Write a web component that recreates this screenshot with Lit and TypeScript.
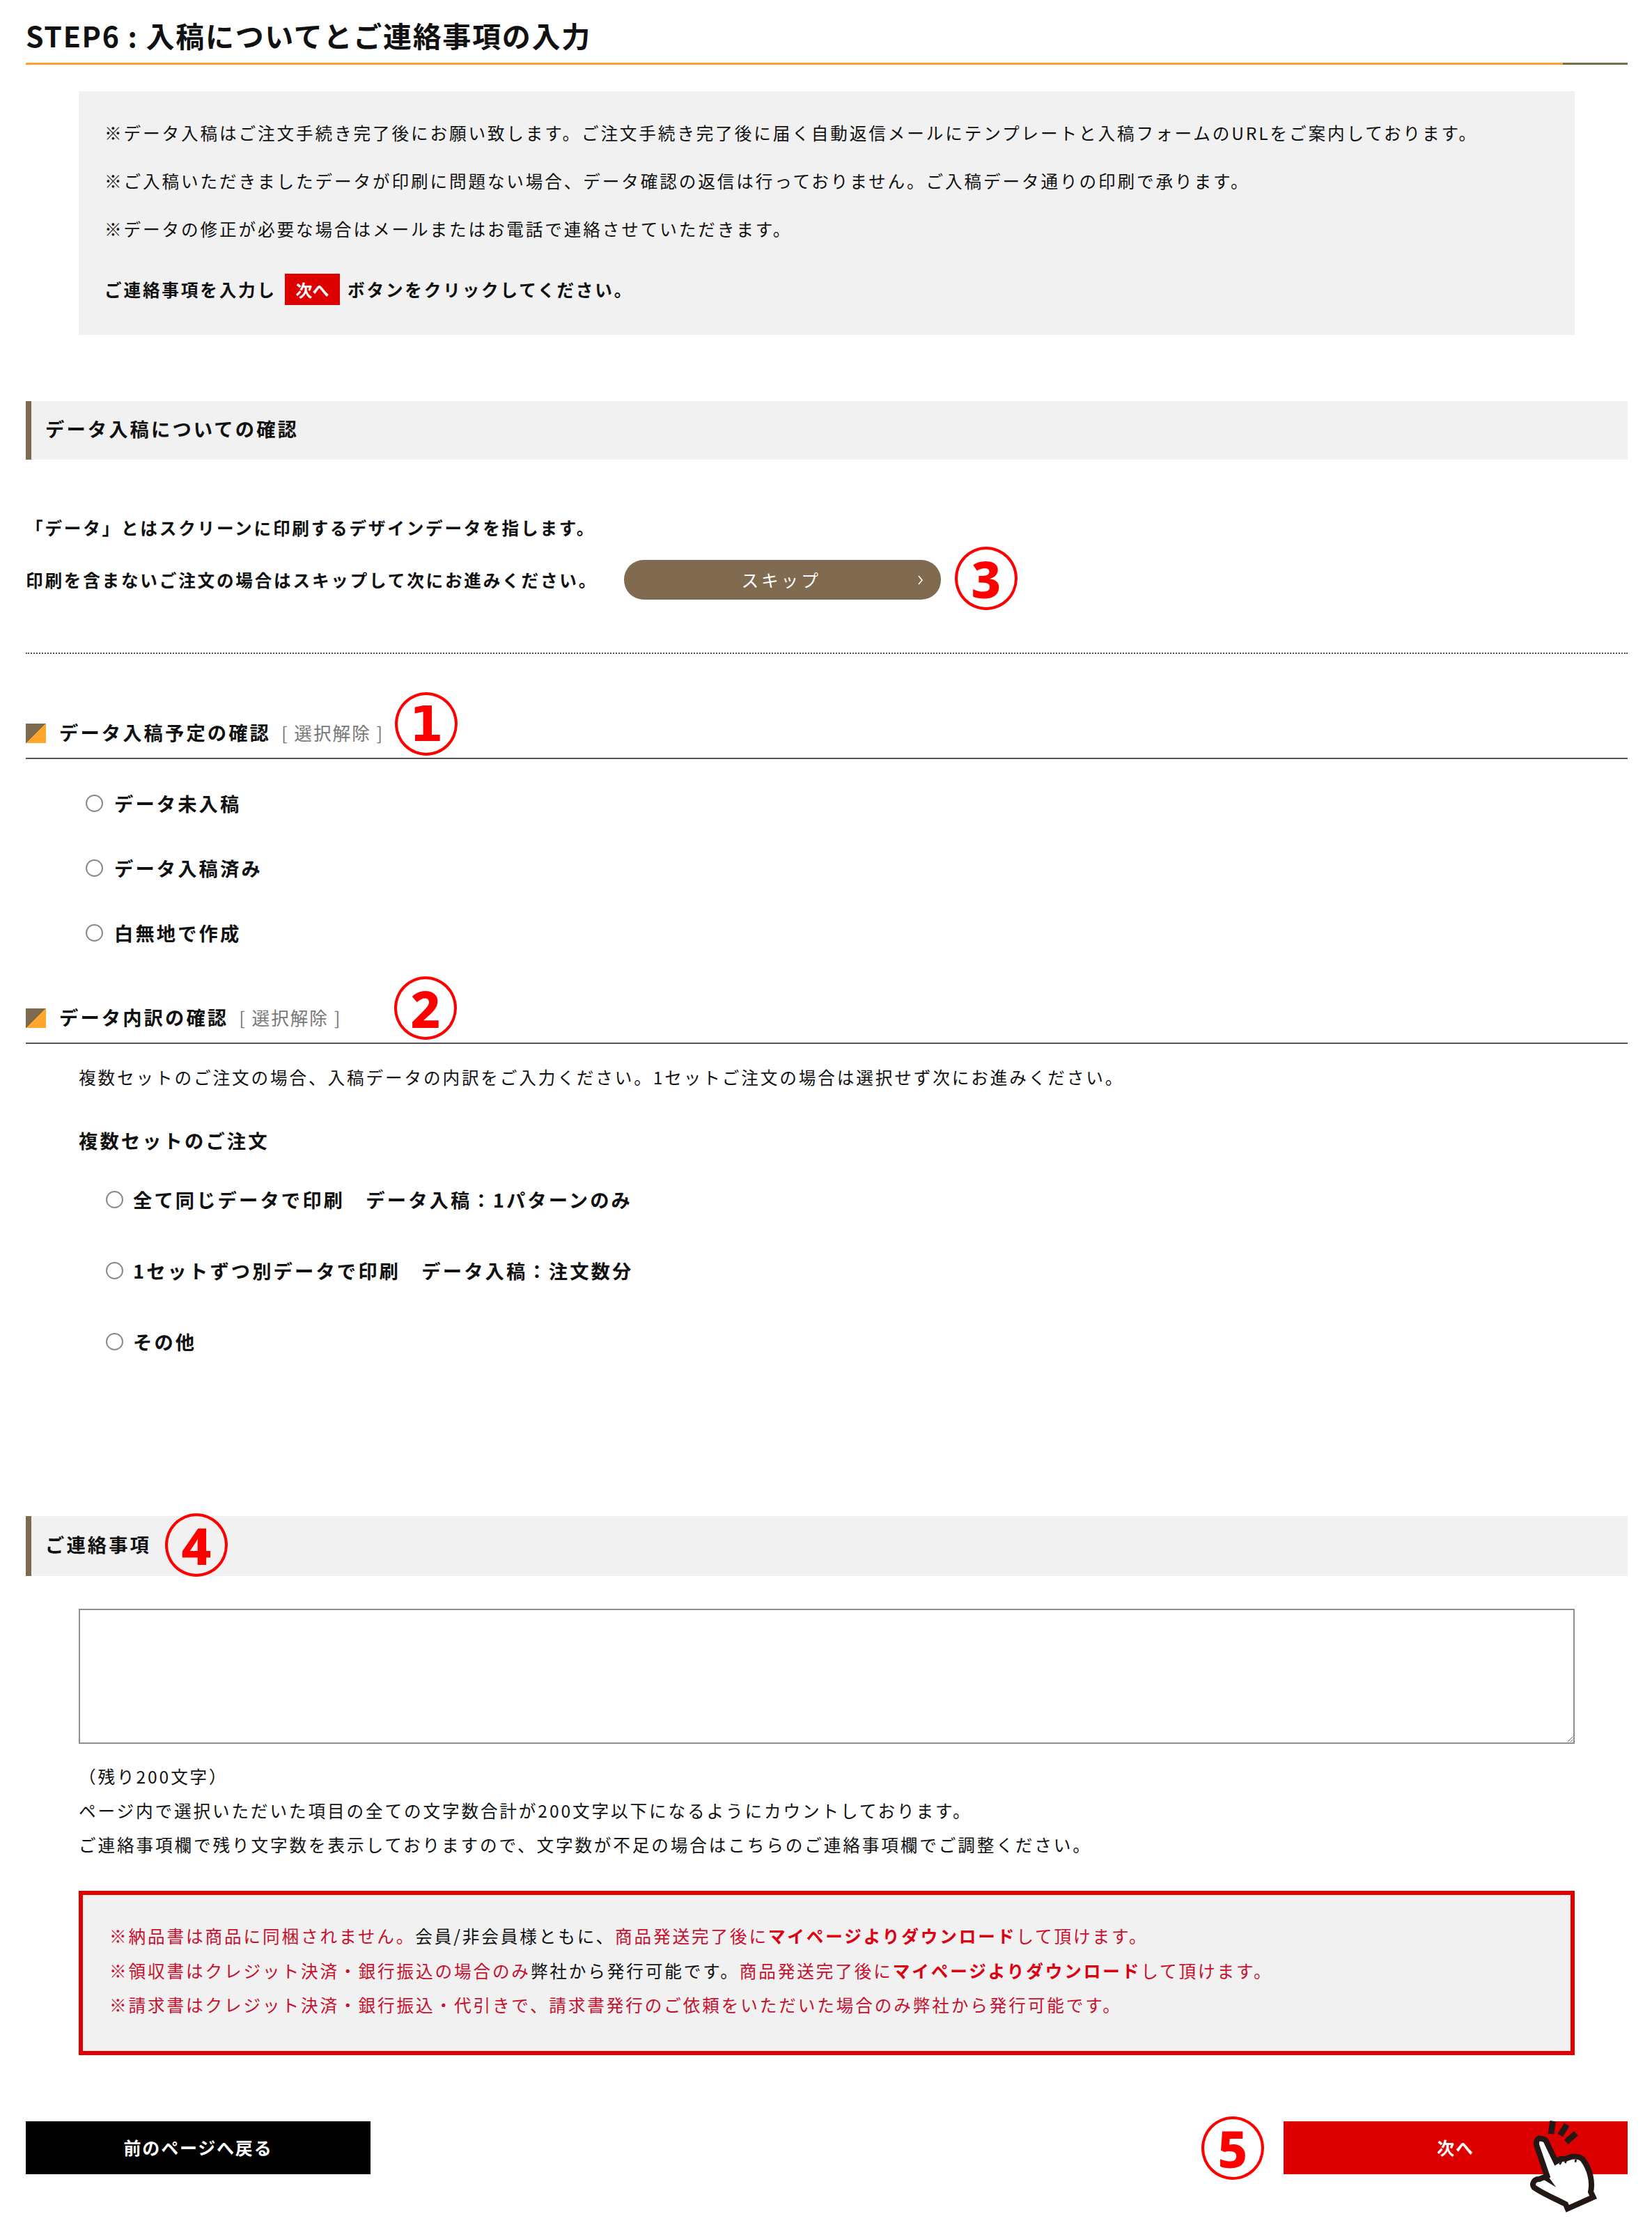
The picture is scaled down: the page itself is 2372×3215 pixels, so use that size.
import { LitElement, html, css } from "lit";
import { customElement } from "lit/decorators.js";

@customElement("app-root")
export class AppRoot extends LitElement {
  static styles = css`
    :host {
      display: block;
      position: relative;
      width: 2372px;
      height: 3215px;
      background: #fff;
      color: #111;
      font-family: "Noto Sans CJK JP", "Noto Sans", sans-serif;
      font-size: 24.6px;
      letter-spacing: 2.9px;
      line-height: 49px;
      overflow: hidden;
    }
    .page { padding: 0 35px 93px 37px; }
    p { margin: 0; }
    b { font-weight: 700; }

    .title { margin: 0; height: 90px; display: flex; align-items: center; font-size: 41px; font-weight: 700; letter-spacing: 1.7px; line-height: 1; padding-top: 10px; box-sizing: border-box; }
    .rule { display: flex; height: 3px; }
    .rule .o { flex: 1; background: #ff9f33; }
    .rule .d { width: 93px; background: #76704a; }

    .notice { margin: 38px 76px 0; height: 350px; box-sizing: border-box; padding: 25px 37px 0; background: #f1f1f1; line-height: 69px; }
    .action { display: flex; align-items: center; height: 69px; margin-top: 18px; font-weight: 700; letter-spacing: 2.85px; }
    .mini { width: 79px; height: 45px; margin: 0 11px 0 12px; display: flex; align-items: center; justify-content: center; background: #dd0000; color: #fff; letter-spacing: 0; font-size: 24px; }

    .bar { height: 84px; box-sizing: border-box; border-left: 8px solid #7d6b50; background: #f1f1f1; padding: 0 0 6px 20px; display: flex; align-items: center; font-weight: 700; font-size: 27.3px; letter-spacing: 3.1px; }
    .bar.first { margin-top: 95px; }
    .bar.second { margin-top: 200px; height: 86px; }

    .intro { margin-top: 60px; line-height: 75px; font-weight: 700; letter-spacing: 2.8px; }
    .skip-row { display: flex; align-items: center; height: 75px; }
    .skip { width: 455px; height: 57px; margin-left: 38px; border-radius: 28px; background: #806b50; color: #fff; font-weight: 400; letter-spacing: 4px; display: flex; align-items: center; justify-content: center; position: relative; padding-right: 4px; box-sizing: border-box; }
    .skip svg { position: absolute; right: 25px; top: 22px; }

    .dots { border-top: 2px dotted #555; margin-top: 67px; }

    .head { display: flex; align-items: center; height: 74px; border-bottom: 2px solid #555; margin-top: 75px; font-weight: 700; font-size: 27.3px; letter-spacing: 3.1px; }
    .head.two { margin-top: 37px; }
    .flag { width: 29px; height: 28px; margin: 4px 19px 0 0; background: linear-gradient(135deg, #7d6b50 50%, #ffa62b 50%); }
    .clear { margin-left: 15px; font-weight: 400; color: #777; font-size: 25.6px; letter-spacing: 2px; }

    .radios { margin: 17px 0 0 86px; }
    .opt { display: flex; align-items: center; height: 93px; font-weight: 700; font-size: 27.3px; letter-spacing: 3.1px; }
    .opt input { appearance: none; width: 25px; height: 25px; box-sizing: border-box; border: 2px solid #8a8a8a; border-radius: 50%; background: #fff; margin: 0 16px 0 0; }
    .desc { margin: 23px 0 0 76px; }
    .sub { margin: 42px 0 0 76px; font-weight: 700; font-size: 27.3px; letter-spacing: 3.1px; }
    .radios.b { margin: 9px 0 0 115px; }
    .radios.b .opt { height: 102px; }
    .radios.b .opt input { margin-right: 14px; }

    .form { margin: 47px 76px 0; }
    textarea { display: block; width: 100%; height: 194px; box-sizing: border-box; border: 2px solid #8f8f8f; background: #fff; margin: 0; padding: 4px; }
    .count { margin-top: 22px; }

    .alert { margin: 42px 76px 0; height: 236px; box-sizing: border-box; border: 6px solid #e00000; background: #f1f1f1; padding: 34px 38px 0; line-height: 49.5px; color: #c8102e; }
    .alert span { color: #111; }
    .alert b { color: #dd0011; }

    .btns { display: flex; justify-content: space-between; margin-top: 95px; }
    .btn { height: 76px; display: flex; align-items: center; justify-content: center; color: #fff; font-weight: 700; font-size: 25px; letter-spacing: 1.8px; padding-bottom: 2px; box-sizing: border-box; }
    .btn.back { width: 495px; background: #000; }
    .btn.next { width: 494px; background: #dd0000; }

    .num { position: absolute; width: 90px; height: 91px; box-sizing: border-box; border: 4px solid #f00; border-radius: 50%; background: #fff; color: #f00; display: flex; align-items: center; justify-content: center; font-family: "Noto Sans", sans-serif; font-weight: 800; font-size: 74px; letter-spacing: 0; line-height: 1; }
    .n1 { left: 567px; top: 994px; font-family: "DejaVu Sans", sans-serif; font-weight: 700; font-size: 70px; }
    .n2 { left: 566px; top: 1402px; }
    .n3 { left: 1371px; top: 785px; }
    .n4 { left: 237px; top: 2173px; background: transparent; }
    .n5 { left: 1725px; top: 3039px; }
    .hand { position: absolute; left: 2172px; top: 3030px; }
  `;

  private opt(label: string, name: string) {
    return html`<label class="opt"><input type="radio" name=${name} /><span>${label}</span></label>`;
  }

  render() {
    return html`
      <div class="page">
        <h1 class="title">STEP6 : 入稿についてとご連絡事項の入力</h1>
        <div class="rule"><div class="o"></div><div class="d"></div></div>

        <section class="notice">
          <p>※データ入稿はご注文手続き完了後にお願い致します。ご注文手続き完了後に届く自動返信メールにテンプレートと入稿フォームのURLをご案内しております。</p>
          <p>※ご入稿いただきましたデータが印刷に問題ない場合、データ確認の返信は行っておりません。ご入稿データ通りの印刷で承ります。</p>
          <p>※データの修正が必要な場合はメールまたはお電話で連絡させていただきます。</p>
          <div class="action">ご連絡事項を入力し<span class="mini">次へ</span>ボタンをクリックしてください。</div>
        </section>

        <div class="bar first">データ入稿についての確認</div>
        <div class="intro">
          <p>「データ」とはスクリーンに印刷するデザインデータを指します。</p>
          <div class="skip-row">
            印刷を含まないご注文の場合はスキップして次にお進みください。
            <div class="skip">スキップ
              <svg width="8" height="14" viewBox="0 0 8 14"><path d="M1 1l5 6-5 6" fill="none" stroke="#fff" stroke-width="1.6"/></svg>
            </div>
          </div>
        </div>
        <div class="dots"></div>

        <div class="head"><i class="flag"></i>データ入稿予定の確認<span class="clear">[ 選択解除 ]</span></div>
        <div class="radios">
          ${this.opt("データ未入稿", "a")}
          ${this.opt("データ入稿済み", "a")}
          ${this.opt("白無地で作成", "a")}
        </div>

        <div class="head two"><i class="flag"></i>データ内訳の確認<span class="clear">[ 選択解除 ]</span></div>
        <p class="desc">複数セットのご注文の場合、入稿データの内訳をご入力ください。1セットご注文の場合は選択せず次にお進みください。</p>
        <p class="sub">複数セットのご注文</p>
        <div class="radios b">
          ${this.opt("全て同じデータで印刷　データ入稿：1パターンのみ", "b")}
          ${this.opt("1セットずつ別データで印刷　データ入稿：注文数分", "b")}
          ${this.opt("その他", "b")}
        </div>

        <div class="bar second">ご連絡事項</div>
        <div class="form">
          <textarea></textarea>
          <p class="count">（残り200文字）</p>
          <p>ページ内で選択いただいた項目の全ての文字数合計が200文字以下になるようにカウントしております。</p>
          <p>ご連絡事項欄で残り文字数を表示しておりますので、文字数が不足の場合はこちらのご連絡事項欄でご調整ください。</p>
        </div>

        <div class="alert">
          <p>※納品書は商品に同梱されません。<span>会員/非会員様ともに、</span>商品発送完了後に<b>マイページよりダウンロード</b>して頂けます。</p>
          <p>※領収書はクレジット決済・銀行振込の場合のみ<span>弊社から発行可能です。</span>商品発送完了後に<b>マイページよりダウンロード</b>して頂けます。</p>
          <p>※請求書はクレジット決済・銀行振込・代引きで、請求書発行のご依頼をいただいた場合のみ弊社から発行可能です。</p>
        </div>

        <div class="btns">
          <div class="btn back">前のページへ戻る</div>
          <div class="btn next">次へ</div>
        </div>
      </div>

      <div class="num n1">1</div>
      <div class="num n2">2</div>
      <div class="num n3">3</div>
      <div class="num n4">4</div>
      <div class="num n5">5</div>

      <svg class="hand" width="200" height="160" viewBox="0 0 600 480">
        <path d="M120 122 C104 120 98 138 105 158 L148 283 L115 297 C92 296 80 318 92 333 C130 360 190 385 228 405 L236 424 L347 375 L336 352 C345 310 335 255 300 210 C285 198 260 197 243 204 C228 212 215 210 205 210 L186 222 L142 130 C136 125 128 122 120 122 Z" fill="#fff" stroke="#231815" stroke-width="24" stroke-linejoin="miter"/>
        <path d="M140 268 L187 332 L128 296 Z" fill="#231815"/>
        <path d="M202 234 L210 222 M226 228 L230 216 M270 224 L272 212" fill="none" stroke="#231815" stroke-width="8"/>
        <path d="M173 47 L165 102 M233 62 L205 108 M273 100 L230 137" fill="none" stroke="#231815" stroke-width="26"/>
      </svg>
    `;
  }
}
